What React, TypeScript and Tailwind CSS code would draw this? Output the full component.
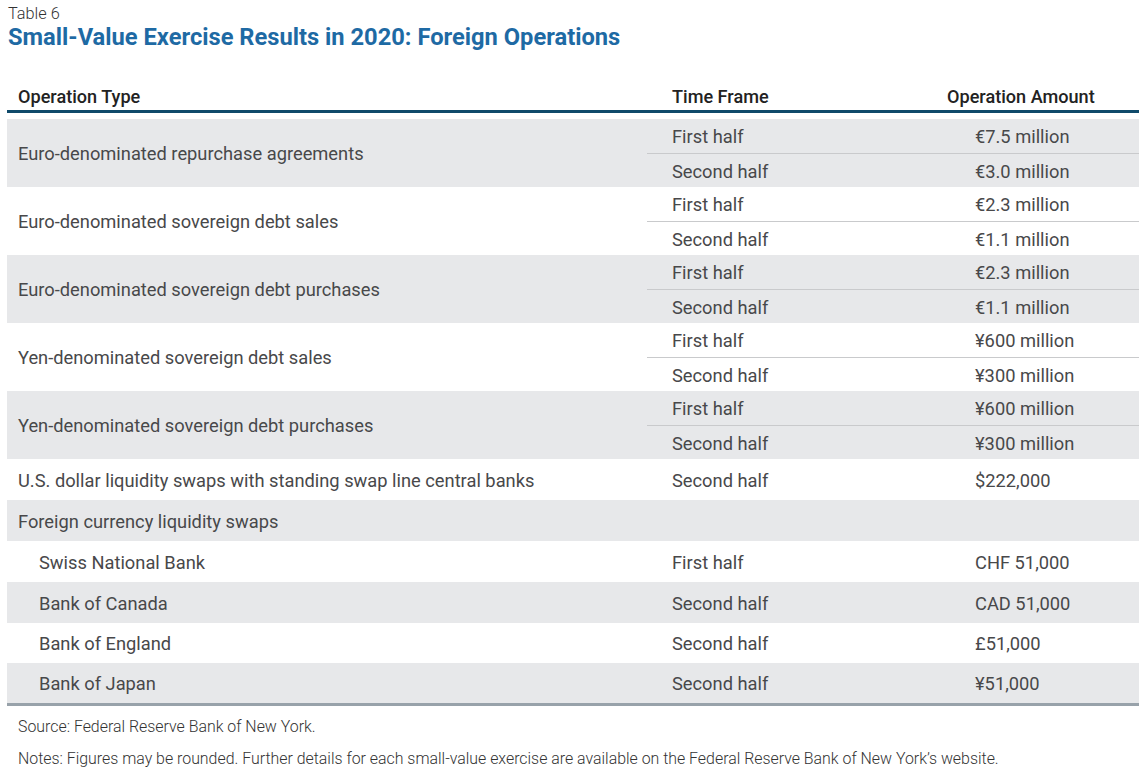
import React from 'react';

type Sub = { frame: string; amount: string };
type Row = { label: string; indent?: boolean; subs: Sub[]; shaded: boolean; h?: string };

const rows: Row[] = [
  {
    label: 'Euro-denominated repurchase agreements',
    shaded: true,
    subs: [
      { frame: 'First half', amount: '€7.5 million' },
      { frame: 'Second half', amount: '€3.0 million' },
    ],
  },
  {
    label: 'Euro-denominated sovereign debt sales',
    shaded: false,
    subs: [
      { frame: 'First half', amount: '€2.3 million' },
      { frame: 'Second half', amount: '€1.1 million' },
    ],
  },
  {
    label: 'Euro-denominated sovereign debt purchases',
    shaded: true,
    subs: [
      { frame: 'First half', amount: '€2.3 million' },
      { frame: 'Second half', amount: '€1.1 million' },
    ],
  },
  {
    label: 'Yen-denominated sovereign debt sales',
    shaded: false,
    subs: [
      { frame: 'First half', amount: '¥600 million' },
      { frame: 'Second half', amount: '¥300 million' },
    ],
  },
  {
    label: 'Yen-denominated sovereign debt purchases',
    shaded: true,
    subs: [
      { frame: 'First half', amount: '¥600 million' },
      { frame: 'Second half', amount: '¥300 million' },
    ],
  },
];

const singles: Row[] = [
  {
    label: 'U.S. dollar liquidity swaps with standing swap line central banks',
    shaded: false,
    h: 'h-[41px]',
    subs: [{ frame: 'Second half', amount: '$222,000' }],
  },
  { label: 'Foreign currency liquidity swaps', shaded: true, h: 'h-[41px]', subs: [{ frame: '', amount: '' }] },
  { label: 'Swiss National Bank', indent: true, shaded: false, h: 'h-[41px]', subs: [{ frame: 'First half', amount: 'CHF 51,000' }] },
  { label: 'Bank of Canada', indent: true, shaded: true, h: 'h-[41px]', subs: [{ frame: 'Second half', amount: 'CAD 51,000' }] },
  { label: 'Bank of England', indent: true, shaded: false, h: 'h-[40px]', subs: [{ frame: 'Second half', amount: '£51,000' }] },
  { label: 'Bank of Japan', indent: true, shaded: true, h: 'h-[40px]', subs: [{ frame: 'Second half', amount: '¥51,000' }] },
];

function GroupRow({ row }: { row: Row }) {
  return (
    <div className={`flex ${row.shaded ? 'bg-[#e7e8ea]' : 'bg-white'}`}>
      <div className="w-[640px] flex items-center pl-[11px] pt-[2px]">{row.label}</div>
      <div className="flex-1 flex flex-col">
        {row.subs.map((s, i) => (
          <div
            key={i}
            className={`flex h-[34px] items-center pt-[2px] ${i > 0 ? 'border-t border-[#c9cacc]' : ''}`}
          >
            <div className="w-[290px] pl-[25px]">{s.frame}</div>
            <div className="flex-1 pl-[38px]">{s.amount}</div>
          </div>
        ))}
      </div>
    </div>
  );
}

function SingleRow({ row }: { row: Row }) {
  const s = row.subs[0];
  return (
    <div className={`flex ${row.h} items-center pt-[2px] ${row.shaded ? 'bg-[#e7e8ea]' : 'bg-white'}`}>
      <div className={`w-[640px] ${row.indent ? 'pl-[32px]' : 'pl-[11px]'}`}>{row.label}</div>
      <div className="w-[290px] pl-[25px]">{s.frame}</div>
      <div className="flex-1 pl-[38px]">{s.amount}</div>
    </div>
  );
}

export default function App() {
  return (
    <div className="min-h-screen bg-white px-[7px] pt-[4px] font-['Roboto',sans-serif]">
      <div className="pl-[1px] text-[16.3px] leading-[20px] font-light text-[#333]">Table 6</div>
      <h1 className="pl-[1px] text-[23.7px] leading-[26px] font-bold text-[#1e6aa4]">
        Small-Value Exercise Results in 2020: Foreign Operations
      </h1>

      <div className="mt-[30px] w-[1132px]">
        <div className="flex h-[33px] pt-[6px] text-[18.1px] leading-[22px] font-medium text-[#222] border-b-[3px] border-[#0f4a6a]">
          <div className="w-[640px] pl-[11px]">Operation Type</div>
          <div className="w-[290px] pl-[25px]">Time Frame</div>
          <div className="flex-1 pl-[10px]">Operation Amount</div>
        </div>

        <div className="mt-[6px] text-[18.3px] text-[#48484a] border-b-[3px] border-[#98a2aa]">
          {rows.map((r, i) => (
            <GroupRow key={i} row={r} />
          ))}
          {singles.map((r, i) => (
            <SingleRow key={i} row={r} />
          ))}
        </div>
      </div>

      <div className="mt-[11px] pl-[11px] text-[15.9px] text-[#333] font-light">
        <p className="leading-[20px]">Source: Federal Reserve Bank of New York.</p>
        <p className="mt-[12px] leading-[20px]">
          Notes: Figures may be rounded. Further details for each small-value exercise are available on the Federal Reserve Bank of New York’s website.
        </p>
      </div>
    </div>
  );
}
